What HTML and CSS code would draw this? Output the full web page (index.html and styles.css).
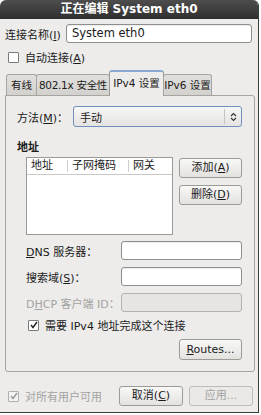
FILE: index.html
```html
<!DOCTYPE html>
<html>
<head>
<meta charset="utf-8">
<link rel="stylesheet" href="styles.css">
</head>
<body>
<div class="win">
  <div class="titlebar">正在编辑 System eth0</div>
  <div class="content">
    <div class="name-row">
      <span class="name-label">连接名称(<u>I</u>)</span>
      <div class="entry name-entry">System eth0</div>
    </div>
    <div class="check-row auto-row">
      <span class="cb"></span>
      <span>自动连接(<u>A</u>)</span>
    </div>
    <div class="tabs">
      <div class="tab t1">有线</div>
      <div class="tab t2">802.1x 安全性</div>
      <div class="tab active t3">IPv4 设置</div>
      <div class="tab t4">IPv6 设置</div>
    </div>
    <div class="panel">
      <div class="method-row">
        <span class="method-label">方法(<u>M</u>)：</span>
        <div class="combo">
          <span class="combo-text">手动</span>
          <span class="combo-sep"></span>
          <svg class="combo-arrow" width="7" height="10" viewBox="0 0 7 10"><path d="M1 4 L3.5 1.5 L6 4 M1 6 L3.5 8.5 L6 6" fill="none" stroke="#333" stroke-width="1.1"/></svg>
        </div>
      </div>
      <div class="section-title">地址</div>
      <div class="addr-area">
        <div class="list">
          <div class="list-head">
            <span class="col c1">地址</span>
            <span class="col c2">子网掩码</span>
            <span class="col c3">网关</span>
          </div>
        </div>
        <div class="addr-buttons">
          <div class="btn">添加(<u>A</u>)</div>
          <div class="btn">删除(<u>D</u>)</div>
        </div>
      </div>
      <div class="form-row first">
        <span class="form-label"><u>D</u>NS 服务器：</span>
        <div class="entry form-entry"></div>
      </div>
      <div class="form-row">
        <span class="form-label">搜索域(<u>S</u>)：</span>
        <div class="entry form-entry"></div>
      </div>
      <div class="form-row">
        <span class="form-label disabled">D<u>H</u>CP 客户端 ID：</span>
        <div class="entry form-entry entry-disabled"></div>
      </div>
      <div class="check-row req-row">
        <span class="cb"><svg width="8" height="8" viewBox="0 0 8 8"><path d="M1 4 L3 6.5 L7 1" fill="none" stroke="#222" stroke-width="1.4"/></svg></span>
        <span>需要 IPv4 地址完成这个连接</span>
      </div>
      <div class="routes-row">
        <div class="btn"><u>R</u>outes...</div>
      </div>
    </div>
    <div class="footer">
      <div class="check-row all-row disabled">
        <span class="cb cb-disabled"><svg width="8" height="8" viewBox="0 0 8 8"><path d="M1 4 L3 6.5 L7 1" fill="none" stroke="#999" stroke-width="1.4"/></svg></span>
        <span>对所有用户可用</span>
      </div>
      <div class="footer-buttons">
        <div class="btn fbtn">取消(<u>C</u>)</div>
        <div class="btn fbtn btn-disabled">应用...</div>
      </div>
    </div>
  </div>
</div>
</body>
</html>
```

FILE: styles.css
```css
html, body {
  margin: 0;
  padding: 0;
  background: #ffffff;
}
body {
  width: 261px;
  height: 415px;
  overflow: hidden;
  font-family: "DejaVu Sans", "Noto Sans CJK SC", sans-serif;
  font-size: 11px;
  color: #1a1a1a;
}
u { text-decoration: underline; text-underline-offset: 1px; }

.win {
  width: 258px;
  height: 412px;
  background: #edeceb;
  border-right: 1px solid #3c3c3c;
  border-bottom: 1px solid #3c3c3c;
  border-radius: 6px 6px 0 0;
  overflow: hidden;
  display: flex;
  flex-direction: column;
}
.titlebar {
  height: 19px;
  background: linear-gradient(#4d4d4d, #2f2f2f);
  color: #ffffff;
  font-weight: bold;
  font-size: 12px;
  line-height: 19px;
  text-align: center;
  flex-shrink: 0;
}
.content {
  padding: 5px 0 0 5px;
  display: flex;
  flex-direction: column;
}
.name-row {
  display: flex;
  align-items: center;
  height: 19px;
  padding-right: 6px;
}
.name-label { width: 61px; }
.entry {
  background: #ffffff;
  border: 1px solid #8e8e8c;
  border-radius: 3px;
  box-sizing: border-box;
  height: 19px;
  line-height: 17px;
  padding-left: 5px;
  box-shadow: inset 0 1px 1px rgba(0,0,0,0.08);
}
.name-entry { flex: 1; font-size: 11.5px; }

.check-row {
  display: flex;
  align-items: center;
  height: 14px;
}
.cb {
  width: 9px;
  height: 9px;
  border: 1px solid #7a7a7a;
  background: #ffffff;
  border-radius: 1px;
  display: flex;
  align-items: center;
  justify-content: center;
  margin-right: 6px;
  flex-shrink: 0;
}
.cb-disabled { border-color: #b0b0b0; background: #f3f3f3; }
.auto-row { margin-top: 7px; padding-left: 3px; }

.tabs {
  margin-top: 6px;
  height: 25px;
  display: flex;
  align-items: flex-end;
  padding-left: 1px;
  position: relative;
  z-index: 1;
}
.tab {
  height: 21px;
  box-sizing: border-box;
  border: 1px solid #a6a5a2;
  border-bottom: none;
  border-radius: 3px 3px 0 0;
  background: linear-gradient(#e2e0dc, #d3d1cd);
  line-height: 21px;
  text-align: center;
  white-space: nowrap;
  overflow: hidden;
  font-size: 10.5px;
}
.t1 { width: 31px; }
.t2 { width: 74px; margin-left: -1px; letter-spacing: -0.3px; }
.t3 { width: 55px; }
.t4 { width: 49px; margin-left: -1px; }
.tab.active {
  height: 26px;
  line-height: 23px;
  background: #edeceb;
  border-color: #9c9b98;
  border-top: 2px solid #8aa9d2;
  margin-bottom: -1px;
  margin-left: -1px;
}

.panel {
  width: 250px;
  box-sizing: border-box;
  border: 1px solid #a6a5a2;
  border-radius: 0 3px 3px 3px;
  padding: 10px 12px 11px 11px;
  display: flex;
  flex-direction: column;
}
.method-row {
  display: flex;
  align-items: center;
  height: 21px;
}
.method-label { width: 56px; white-space: nowrap; }
.combo {
  flex: 1;
  height: 21px;
  box-sizing: border-box;
  border: 1px solid #6f8fbf;
  border-radius: 3px;
  background: linear-gradient(#f7f7f6, #e4e3e1);
  display: flex;
  align-items: center;
}
.combo-text { flex: 1; padding-left: 6px; }
.combo-sep {
  width: 1px;
  height: 15px;
  background: #c5c4c1;
  margin-right: 5px;
}
.combo-arrow { margin-right: 4px; }

.section-title {
  margin-top: 14px;
  font-weight: bold;
  height: 13px;
  line-height: 13px;
}
.addr-area {
  margin-top: 3px;
  display: flex;
  padding-left: 9px;
}
.list {
  width: 147px;
  height: 78px;
  box-sizing: border-box;
  border: 1px solid #9a9996;
  background: #ffffff;
}
.list-head {
  display: flex;
  height: 16px;
  border-bottom: 1px solid #c9c8c5;
  align-items: center;
}
.col {
  box-sizing: border-box;
  padding-left: 4px;
  height: 12px;
  line-height: 12px;
}
.c1 { width: 41px; border-right: 1px solid #cfcecb; }
.c2 { width: 61px; border-right: 1px solid #cfcecb; }
.c3 { flex: 1; }

.addr-buttons {
  margin-left: 6px;
  margin-top: 1px;
  display: flex;
  flex-direction: column;
  gap: 7px;
}
.btn {
  width: 63px;
  height: 20px;
  box-sizing: border-box;
  border: 1px solid #9c9b98;
  border-radius: 3px;
  background: linear-gradient(#f8f8f7, #e3e2df);
  text-align: center;
  line-height: 18px;
}

.form-row {
  display: flex;
  align-items: center;
  margin-top: 7px;
  padding-left: 9px;
  height: 19px;
}
.form-row.first { margin-top: 6px; }
.form-label { width: 95px; white-space: nowrap; }
.form-entry { width: 121px; }
.entry-disabled {
  background: #e6e5e3;
  border-color: #b4b3b0;
  box-shadow: none;
}
.disabled { color: #a3a3a1; }

.req-row { margin-top: 6px; padding-left: 11px; }

.routes-row {
  margin-top: 7px;
  display: flex;
  justify-content: flex-end;
}
.routes-row .btn { height: 21px; line-height: 19px; }

.footer {
  margin-top: 14px;
  display: flex;
  align-items: center;
  padding-right: 5px;
  height: 20px;
}
.all-row { padding-left: 3px; flex: 1; }
.footer-buttons {
  display: flex;
  gap: 6px;
}
.fbtn { width: 64px; }
.btn-disabled {
  color: #a3a3a1;
  border-color: #bdbcb9;
  background: #eae9e7;
}
```
